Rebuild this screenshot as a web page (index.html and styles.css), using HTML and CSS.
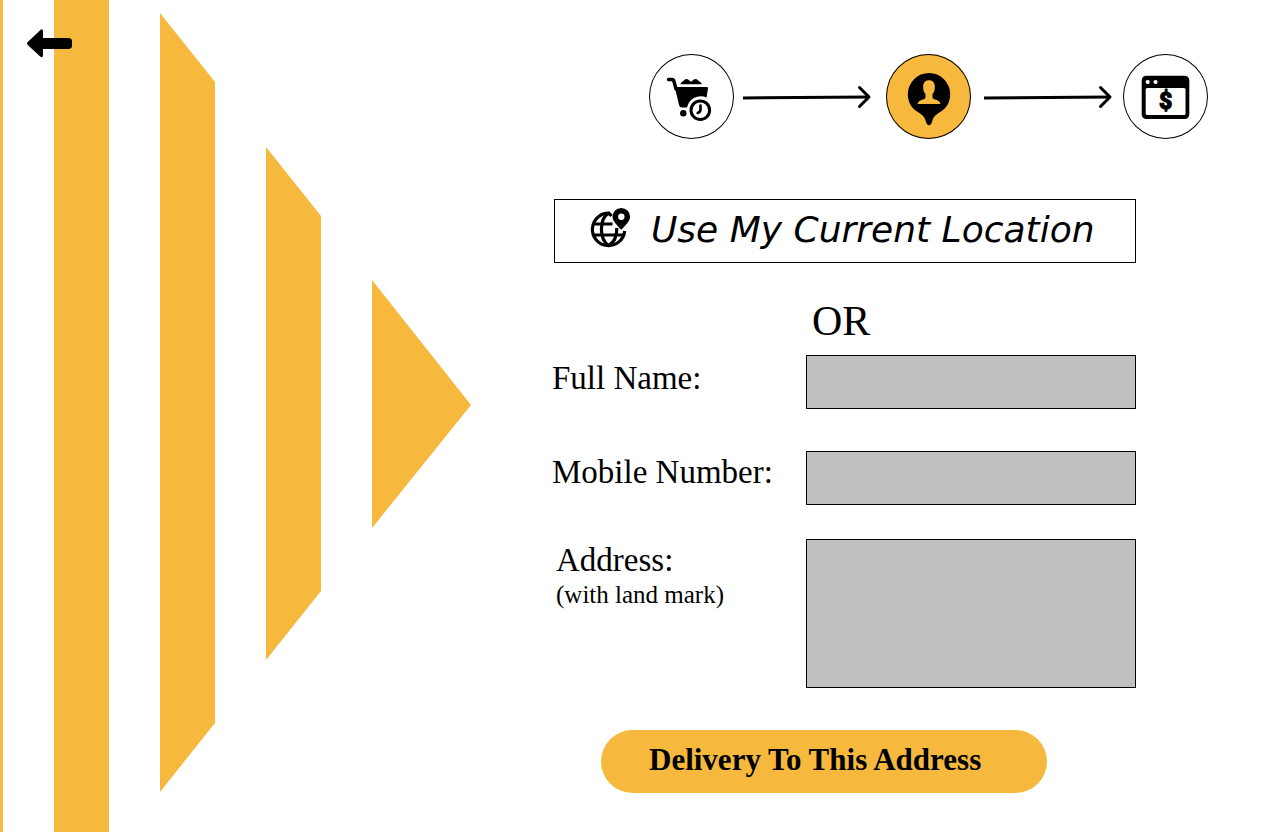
FILE: index.html
```html
<!DOCTYPE html>
<html lang="en">
<head>
<meta charset="utf-8">
<meta name="viewport" content="width=device-width, initial-scale=1">
<title>Delivery Address</title>
<link rel="stylesheet" href="styles.css">
</head>
<body>
<div class="page">
  <aside class="art">
    <svg class="art-shapes" viewBox="0 0 472 832" preserveAspectRatio="none" aria-hidden="true">
      <path d="M0 0H3V832H0ZM54 0H109V832H54ZM160 13L215 82V723L160 792ZM266 147L321 216V591L266 660ZM372 280L471 405L372 528Z"/>
    </svg>
    <button class="back" type="button" aria-label="Go back">
      <svg class="back-icon" viewBox="0 0 45 29" aria-hidden="true">
        <path d="M.7 13L13.2 1.2Q15.8-.8 16 2V9H41Q45 9 45 12V17Q45 20 41 20H16V26Q15.800 29.500 13.200 27.600L.7 16Q-.6 14.500 .7 13Z"/>
      </svg>
    </button>
  </aside>

  <main class="content">
    <div class="steps">
      <span class="step">
        <svg viewBox="0 0 85 85" role="img" aria-label="Cart">
          <path d="M19.500 25.500H23Q24.500 25.500 25 27.500L27 35" fill="none" stroke="#000" stroke-width="3.400" stroke-linecap="round"/>
          <path d="M25.800 33H58Q59.300 33 59 34.500L57.500 43.500A14 14 0 0 0 38 53.500H33Q30.500 53.500 30 51ZM31.200 30.300Q32.500 28 34.300 27L35.500 25.800Q37.500 24.300 39.500 25.800L42 27.800L44.500 25.800Q46.500 24.300 48.500 25.800L49.700 27Q51.700 28 53 30.300Z"/>
          <circle cx="34.300" cy="59.200" r="3.200"/>
          <circle cx="51.300" cy="56.200" r="9.300" fill="none" stroke="#000" stroke-width="3"/>
          <path d="M51.500 51.500V55.500Q51.500 58 48.700 59" fill="none" stroke="#000" stroke-width="2.600" stroke-linecap="round"/>
        </svg>
      </span>
      <svg class="arrow" viewBox="0 0 152 24" aria-hidden="true"><path d="M9 13L135 12"/><path d="M125.500 2.500L135 12L125.500 21.500" stroke-linecap="round" stroke-linejoin="round"/></svg>
      <span class="step step-current" aria-current="step">
        <svg viewBox="0 0 85 85" role="img" aria-label="Address">
          <path d="M43 19A21.200 21.200 0 0 1 64.200 40C64.200 48 60.500 54 55 57.500C49 61 47.500 63 46.300 67C45.300 70 44.500 71.300 43 71.300S40.700 70 39.700 67C38.500 63 37 61 31 57.500C25.500 54 21.800 48 21.800 40A21.200 21.200 0 0 1 43 19Z"/>
          <path class="person" d="M43 26.300C46.700 26.300 49 28.800 48.800 33C49 36 48 38.500 46.500 40V43Q46.500 45 49 45.500Q54 46.800 54.500 50H31.500Q32 46.800 37 45.500Q39.500 45 39.500 43V40C38 38.500 37 36 37.200 33C37 28.800 39.300 26.300 43 26.300Z"/>
        </svg>
      </span>
      <svg class="arrow" viewBox="0 0 152 24" aria-hidden="true"><path d="M13 13L139 12"/><path d="M129.500 2.500L139 12L129.500 21.500" stroke-linecap="round" stroke-linejoin="round"/></svg>
      <span class="step">
        <svg viewBox="0 0 85 85" role="img" aria-label="Payment">
          <rect x="18.700" y="21.700" width="47.600" height="43.300" rx="4.500"/>
          <rect x="22.700" y="34" width="39.800" height="27" rx="1.500" fill="#fff"/>
          <circle cx="24.700" cy="28" r="2.100" fill="#fff"/>
          <circle cx="32.500" cy="28" r="2.100" fill="#fff"/>
          <text class="dollar" x="42.700" y="54.500" text-anchor="middle">$</text>
        </svg>
      </span>
    </div>

    <form class="address-form">
      <button class="locate" type="button">
        <svg class="globe" viewBox="0 0 41 44" aria-hidden="true">
          <g fill="none" stroke="#000" stroke-width="3.200">
            <path d="M20 6.200A16.200 16.200 0 1 0 34.700 24"/>
            <path d="M18.700 6.200C9 12 9 32.500 18.700 38.500C24 35.500 27 30 26.800 21M18.700 6.200Q20.500 7.500 21.500 9"/>
            <path d="M3.500 17H22.500M3.500 28H34"/>
          </g>
          <path fill-rule="evenodd" d="M31.300 1A8.800 8.800 0 0 1 40.100 9.800C40.100 14 35.500 18.500 31.300 22.800C27.100 18.500 22.500 14 22.500 9.800A8.800 8.800 0 0 1 31.300 1ZM31.300 6.500A3.200 3.200 0 1 0 31.300 12.900A3.200 3.200 0 1 0 31.300 6.500Z"/>
        </svg>
        <span>Use My Current Location</span>
      </button>
      <p class="or">OR</p>
      <div class="row">
        <label class="label label-name" for="name">Full Name:</label>
        <input class="field" id="name" type="text">
      </div>
      <div class="row row-mobile">
        <label class="label" for="mobile">Mobile Number:</label>
        <input class="field" id="mobile" type="tel">
      </div>
      <div class="row row-address">
        <label class="label label-address" for="address">Address:<small class="hint">(with land mark)</small></label>
        <textarea class="field field-tall" id="address"></textarea>
      </div>
      <button class="submit" type="submit">Delivery To This Address</button>
    </form>
  </main>
</div>
</body>
</html>
```

FILE: styles.css
```css
* {
  box-sizing: border-box;
}

body {
  margin: 0;
  background: #fff;
  color: #000;
  font-family: "Liberation Serif", serif;
}

button {
  color: inherit;
  cursor: pointer;
}

.page {
  display: grid;
  grid-template-columns: 472px 1fr;
  min-height: 100vh;
}

.art {
  position: relative;
}

.art-shapes {
  display: block;
  width: 100%;
  height: 100%;
  fill: #f6b83d;
}

.back {
  position: absolute;
  top: 29px;
  left: 27px;
  padding: 0;
  border: 0;
  background: none;
}

.back-icon {
  display: block;
  width: 45px;
  height: 29px;
}

.content {
  display: flex;
  flex-direction: column;
  align-items: flex-end;
  gap: 60px;
  padding: 54px 72px 39px 40px;
}

.steps {
  display: flex;
  align-items: center;
}

.step {
  width: 85px;
  height: 85px;
  border-radius: 50%;
  box-shadow: inset 0 0 0 1px #000;
}

.step svg {
  display: block;
}

.step-current {
  background: #f6b83d;
}

.person {
  fill: #f6b83d;
}

.dollar {
  font: 900 23px Roboto, sans-serif;
  stroke: #000;
  stroke-width: 1px;
}

.arrow {
  width: 152px;
  height: 24px;
  fill: none;
  stroke: #000;
  stroke-width: 3;
}

.address-form {
  width: 100%;
  max-width: 584px;
  margin-right: 72px;
}

.locate {
  display: flex;
  align-items: center;
  gap: 20px;
  width: calc(100% - 2px);
  height: 64px;
  margin-left: 2px;
  padding: 0 35px 4px;
  border: 1px solid #000;
  background: #fff;
  font: italic 36px "DejaVu Sans", sans-serif;
  white-space: nowrap;
}

.globe {
  flex: none;
  width: 41px;
  height: 44px;
}

.or {
  margin: 34px 0 10px 260px;
  font-size: 42px;
  line-height: 48px;
}

.row {
  display: grid;
  grid-template-columns: 254px 1fr;
  align-items: start;
}

.row-mobile {
  margin-top: 42px;
}

.row-address {
  margin-top: 34px;
}

.label {
  font-size: 33px;
  line-height: 42px;
}

.label-name {
  padding-top: 2px;
}

.label-address {
  padding-left: 4px;
}

.hint {
  display: block;
  font-size: 25px;
  line-height: 28px;
}

.field {
  display: block;
  width: 100%;
  height: 54px;
  padding: 8px 12px;
  border: 1px solid #000;
  border-radius: 0;
  background: #c0c0c0;
  font: 24px "Liberation Serif", serif;
}

.field-tall {
  height: 149px;
  resize: none;
}

.submit {
  display: block;
  width: 446px;
  height: 63px;
  margin: 42px 0 0 49px;
  padding: 0 48px 4px;
  border: 0;
  border-radius: 32px;
  background: #f6b83d;
  font: bold 31px "Liberation Serif", serif;
  text-align: left;
}
```
